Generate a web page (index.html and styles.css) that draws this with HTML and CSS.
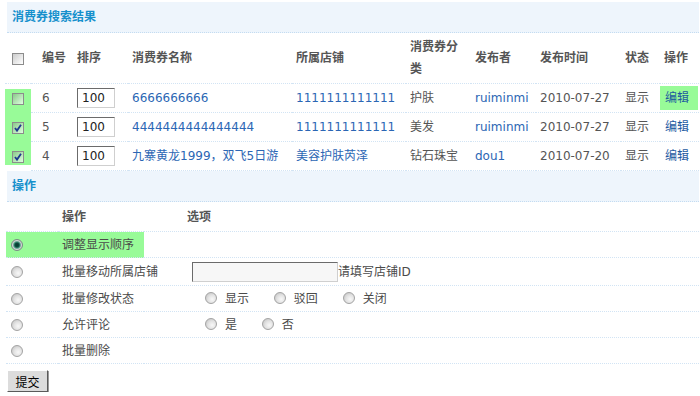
FILE: index.html
```html
<!DOCTYPE html>
<html lang="zh-CN">
<head>
    <meta charset="UTF-8">
    <title>消费券搜索结果</title>
    <link rel="stylesheet" href="styles.css">
</head>
<body>
    <div class="bar">消费券搜索结果</div>
    <table class="list">
        <colgroup>
            <col class="c-chk"><col class="c-id"><col class="c-ord"><col class="c-name"><col class="c-shop">
            <col class="c-cat"><col class="c-user"><col class="c-date"><col class="c-st"><col class="c-op">
        </colgroup>
        <thead>
            <tr>
                <th class="chk"><input type="checkbox" class="box"></th>
                <th class="id">编号</th>
                <th>排序</th>
                <th>消费券名称</th>
                <th>所属店铺</th>
                <th>消费券分类</th>
                <th>发布者</th>
                <th>发布时间</th>
                <th>状态</th>
                <th>操作</th>
            </tr>
        </thead>
        <tbody>
            <tr class="top">
                <td class="chk hl"><input type="checkbox" class="box"></td>
                <td class="id">6</td>
                <td><input type="text" class="ord" value="100"></td>
                <td><a href="#">6666666666</a></td>
                <td><a href="#">1111111111111</a></td>
                <td>护肤</td>
                <td><a href="#">ruiminmi</a></td>
                <td>2010-07-27</td>
                <td>显示</td>
                <td class="op"><a href="#" class="edit hl">编辑</a></td>
            </tr>
            <tr>
                <td class="chk hl"><input type="checkbox" class="box" checked></td>
                <td class="id">5</td>
                <td><input type="text" class="ord" value="100"></td>
                <td><a href="#">4444444444444444</a></td>
                <td><a href="#">1111111111111</a></td>
                <td>美发</td>
                <td><a href="#">ruiminmi</a></td>
                <td>2010-07-27</td>
                <td>显示</td>
                <td class="op"><a href="#" class="edit">编辑</a></td>
            </tr>
            <tr class="last">
                <td class="chk hl"><input type="checkbox" class="box" checked></td>
                <td class="id">4</td>
                <td><input type="text" class="ord" value="100"></td>
                <td><a href="#">九寨黄龙1999，双飞5日游</a></td>
                <td><a href="#">美容护肤芮泽</a></td>
                <td>钻石珠宝</td>
                <td><a href="#">dou1</a></td>
                <td>2010-07-20</td>
                <td>显示</td>
                <td class="op"><a href="#" class="edit">编辑</a></td>
            </tr>
        </tbody>
    </table>

    <div class="bar">操作</div>
    <form class="ops">
        <table class="ops-table">
            <colgroup><col class="o-pick"><col class="o-name"><col></colgroup>
            <thead>
                <tr><th></th><th>操作</th><th class="val">选项</th></tr>
            </thead>
            <tbody>
                <tr>
                    <td class="pick hl"><input type="radio" name="act" class="dot" checked></td>
                    <td class="name hl">调整显示顺序</td>
                    <td class="val"></td>
                </tr>
                <tr class="tall">
                    <td class="pick"><input type="radio" name="act" class="dot"></td>
                    <td class="name">批量移动所属店铺</td>
                    <td class="val"><input type="text" class="shop">请填写店铺ID</td>
                </tr>
                <tr>
                    <td class="pick"><input type="radio" name="act" class="dot"></td>
                    <td class="name">批量修改状态</td>
                    <td class="val">
                        <label class="choice"><input type="radio" name="st" class="dot">显示</label>
                        <label class="choice"><input type="radio" name="st" class="dot">驳回</label>
                        <label class="choice"><input type="radio" name="st" class="dot">关闭</label>
                    </td>
                </tr>
                <tr>
                    <td class="pick"><input type="radio" name="act" class="dot"></td>
                    <td class="name">允许评论</td>
                    <td class="val">
                        <label class="choice"><input type="radio" name="cm" class="dot">是</label>
                        <label class="choice"><input type="radio" name="cm" class="dot">否</label>
                    </td>
                </tr>
                <tr>
                    <td class="pick"><input type="radio" name="act" class="dot"></td>
                    <td class="name">批量删除</td>
                    <td class="val"></td>
                </tr>
            </tbody>
        </table>
        <button type="button" class="submit">提交</button>
    </form>
</body>
</html>
```

FILE: styles.css
```css
body {
    margin: 2px 1px 0 5px;
    font-family: "DejaVu Sans", "Noto Sans CJK SC", sans-serif;
    font-size: 12px;
    line-height: 16px;
    color: #555;
    background: #fff;
}

a {
    color: #2b66b4;
    text-decoration: none;
}

.hl {
    background-color: #98fb98;
}

.bar {
    margin-left: 2px;
    height: 30px;
    line-height: 30px;
    padding-left: 5px;
    background-color: #eef5fc;
    border-bottom: 1px dotted #c4dcf1;
    color: #1690cc;
    font-weight: bold;
}

/* result list */
.list {
    width: 694px;
    table-layout: fixed;
    border-collapse: separate;
    border-spacing: 0;
}

.c-chk { width: 26px; }
.c-id { width: 42px; }
.c-ord { width: 55px; }
.c-name { width: 164px; }
.c-shop { width: 114px; }
.c-cat { width: 65px; }
.c-user { width: 65px; }
.c-date { width: 85px; }
.c-st { width: 39px; }
.c-op { width: 39px; }

.list th,
.list td {
    padding: 0 4px;
    text-align: left;
    white-space: nowrap;
    border-bottom: 1px dotted #d2e4f4;
}

.list th {
    height: 44px;
    padding: 3px 4px;
    line-height: 22px;
    font-weight: bold;
    color: #555;
    white-space: normal;
}

.list td {
    height: 28px;
}

.list .id {
    padding-left: 11px;
}

.list .chk {
    padding: 0;
    text-align: center;
}

.list td.chk {
    border-bottom: none;
    height: 29px;
}

.list .top td.chk {
    box-shadow: inset 0 5px #fff;
}

.list .last td.chk {
    box-shadow: inset 0 -6px #fff;
}

.list td.op {
    padding: 0;
}

.edit {
    display: block;
    margin: 2px 1px 2px 0;
    height: 24px;
    line-height: 24px;
    padding-left: 5px;
    color: #1d5a9f;
}

.box {
    appearance: none;
    -webkit-appearance: none;
    width: 12px;
    height: 12px;
    margin: 0;
    border: 1px solid #8c8c8c;
    background: linear-gradient(135deg, rgba(110, 110, 110, 0.35), rgba(255, 255, 255, 0.7));
    vertical-align: middle;
}

.box:checked {
    background:
        url("data:image/svg+xml,%3Csvg xmlns='http://www.w3.org/2000/svg' width='10' height='10'%3E%3Cpath d='M2 5 L4 7.6 L8 1.8' fill='none' stroke='%231c3a8c' stroke-width='1.8'/%3E%3C/svg%3E") center / 10px 10px no-repeat,
        linear-gradient(135deg, rgba(110, 110, 110, 0.35), rgba(255, 255, 255, 0.7));
}

.ord {
    width: 38px;
    height: 20px;
    box-sizing: border-box;
    margin: 0;
    padding: 0 0 0 4px;
    border: 1px solid;
    border-color: #6b6b6b #cfcfcf #cfcfcf #6b6b6b;
    font: 12px "DejaVu Sans", sans-serif;
    color: #222;
    vertical-align: middle;
}

/* operations */
.ops-table {
    margin-left: 1px;
    width: 693px;
    table-layout: fixed;
    border-collapse: separate;
    border-spacing: 0;
}

.o-pick { width: 52px; }
.o-name { width: 86px; }

.ops-table th,
.ops-table td {
    padding: 0;
    text-align: left;
    white-space: nowrap;
    border-bottom: 1px dotted #d2e4f4;
}

.ops-table th {
    height: 29px;
    font-weight: bold;
    color: #555;
}

.ops-table td {
    height: 25px;
    color: #4a4a4a;
}

.ops-table .tall td {
    height: 27px;
}

.ops-table th:nth-child(2),
.ops-table .name {
    padding-left: 4px;
}

.ops-table .val {
    padding-left: 43px;
}

.ops-table .pick {
    padding-left: 5px;
}

.dot {
    appearance: none;
    -webkit-appearance: none;
    width: 12px;
    height: 12px;
    margin: 0;
    border: 1px solid #a3a3a3;
    border-radius: 50%;
    background: radial-gradient(circle at 62% 62%, #f8f8f8 0, #e3e3e3 45%, #bcbcbc 100%);
    vertical-align: middle;
}

.dot:checked {
    border-color: #7b8c86;
    background: radial-gradient(circle, #08392f 0, #0c4a3e 2px, #3d8f78 3px, #d5d9d7 4.5px, #b7b7b7 6px);
}

.choice {
    margin-left: 18px;
    margin-right: 3px;
}

.choice + .choice {
    margin-left: 18px;
}

.choice .dot {
    margin-right: 8px;
    position: relative;
    top: -1px;
}

.shop {
    width: 146px;
    height: 20px;
    box-sizing: border-box;
    margin: 0 0 0 5px;
    border: 1px solid;
    border-color: #6b6b6b #cfcfcf #cfcfcf #6b6b6b;
    background: #f7f7f7;
    vertical-align: middle;
}

.submit {
    margin: 6px 0 0 2px;
    width: 41px;
    height: 22px;
    padding: 0;
    border: 1px solid;
    border-color: #fff #5a5a5a #5a5a5a #fff;
    box-shadow: 1px 1px 0 #999;
    background: #dcdcdc;
    font: 12px "Noto Sans CJK SC", sans-serif;
    color: #000;
}
```
